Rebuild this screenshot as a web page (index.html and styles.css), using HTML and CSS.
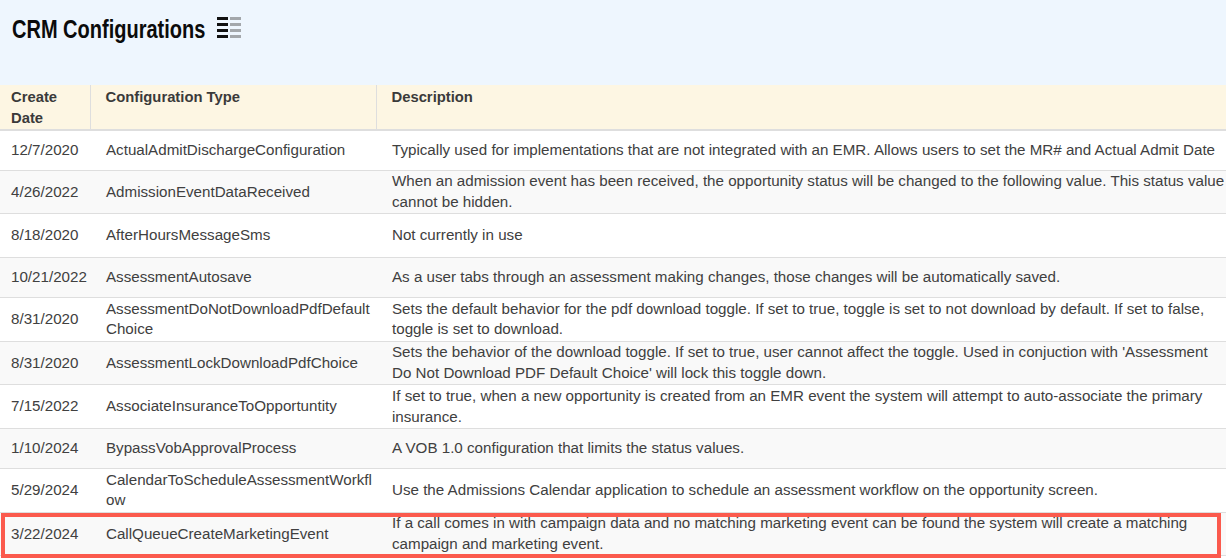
FILE: index.html
```html
<!DOCTYPE html>
<html lang="en">
<head>
<meta charset="utf-8">
<title>CRM Configurations</title>
<link rel="stylesheet" href="styles.css">
</head>
<body>
<div class="page">
  <header class="head">
    <h1 class="title">CRM Configurations</h1>
    <svg class="icon" width="26" height="24" viewBox="0 0 26 24" aria-hidden="true">
      <g fill="#111"><rect x="1" y="1" width="11" height="3"/><rect x="1" y="7" width="11" height="3"/><rect x="1" y="13" width="11" height="3"/><rect x="1" y="19" width="11" height="3"/></g>
      <g fill="#a3a7ab"><rect x="14" y="1" width="11" height="3"/><rect x="14" y="7" width="11" height="3"/><rect x="14" y="13" width="11" height="3"/><rect x="14" y="19" width="11" height="3"/></g>
    </svg>
  </header>
  <table class="grid">
    <colgroup><col class="c1"><col class="c2"><col class="c3"></colgroup>
    <thead>
      <tr><th>Create Date</th><th>Configuration Type</th><th>Description</th></tr>
    </thead>
    <tbody>
      <tr><td>12/7/2020</td><td>ActualAdmitDischargeConfiguration</td><td>Typically used for implementations that are not integrated with an EMR. Allows users to set the MR# and Actual Admit Date</td></tr>
      <tr><td>4/26/2022</td><td>AdmissionEventDataReceived</td><td>When an admission event has been received, the opportunity status will be changed to the following value. This status value cannot be hidden.</td></tr>
      <tr class="tall"><td>8/18/2020</td><td>AfterHoursMessageSms</td><td>Not currently in use</td></tr>
      <tr><td>10/21/2022</td><td>AssessmentAutosave</td><td>As a user tabs through an assessment making changes, those changes will be automatically saved.</td></tr>
      <tr><td>8/31/2020</td><td>AssessmentDoNotDownloadPdfDefaultChoice</td><td>Sets the default behavior for the pdf download toggle. If set to true, toggle is set to not download by default. If set to false, toggle is set to download.</td></tr>
      <tr><td>8/31/2020</td><td>AssessmentLockDownloadPdfChoice</td><td>Sets the behavior of the download toggle. If set to true, user cannot affect the toggle. Used in conjuction with 'Assessment Do Not Download PDF Default Choice' will lock this toggle down.</td></tr>
      <tr><td>7/15/2022</td><td>AssociateInsuranceToOpportuntity</td><td>If set to true, when a new opportunity is created from an EMR event the system will attempt to auto-associate the primary insurance.</td></tr>
      <tr><td>1/10/2024</td><td>BypassVobApprovalProcess</td><td>A VOB 1.0 configuration that limits the status values.</td></tr>
      <tr><td>5/29/2024</td><td>CalendarToScheduleAssessmentWorkflow</td><td>Use the Admissions Calendar application to schedule an assessment workflow on the opportunity screen.</td></tr>
      <tr><td>3/22/2024</td><td>CallQueueCreateMarketingEvent</td><td>If a call comes in with campaign data and no matching marketing event can be found the system will create a matching campaign and marketing event.</td></tr>
    </tbody>
  </table>
  <div class="callout"></div>
</div>
</body>
</html>
```
FILE: styles.css
```css
html, body { margin: 0; padding: 0; }
body { background: #fff; overflow: hidden; font-family: "Liberation Sans", Arial, sans-serif; }
.page { position: relative; width: 1226px; height: 558px; overflow: hidden; }
.head { height: 85px; background: #eef6fe; display: flex; align-items: flex-start; padding: 16px 0 0 12px; box-sizing: border-box; gap: 10px; }
.title { margin: 0; width: 194px; white-space: nowrap; font-size: 25px; line-height: 26px; font-weight: 700; color: #0b0b0b; transform: scaleX(0.8); transform-origin: left center; }
.icon { display: block; }
.grid { width: 1226px; border-collapse: collapse; table-layout: fixed; font-size: 15.17px; line-height: 20.7px; color: #404040; }
.c1 { width: 90px; } .c2 { width: 286px; } .c3 { width: 850px; }
th { background: #fdf6e3; text-align: left; vertical-align: top; font-size: 14.8px; line-height: 21px; font-weight: 700; color: #3a3a3a; padding: 2px 14px 0 15px; height: 42px; border-bottom: 2px solid #dedede; border-left: 1px solid #dedede; }
th:first-child, td:first-child { padding-left: 11px; padding-right: 0; border-left: 0; }
th:first-child { padding-right: 20px; }
td { padding: 0.7px 0 0.7px 16px; height: 37.3px; vertical-align: middle; border-bottom: 1px solid #dedede; word-break: break-all; }
td:nth-child(3) { word-break: normal; }
td:nth-child(2) { padding-right: 2px; }
tbody tr:nth-child(even) { background: #f9f9f9; }
.tall td { height: 41.4px; }
.callout { position: absolute; left: 1px; top: 513px; width: 1220px; height: 45px; box-sizing: border-box; border: 4px solid #fb5a4d; }
```
